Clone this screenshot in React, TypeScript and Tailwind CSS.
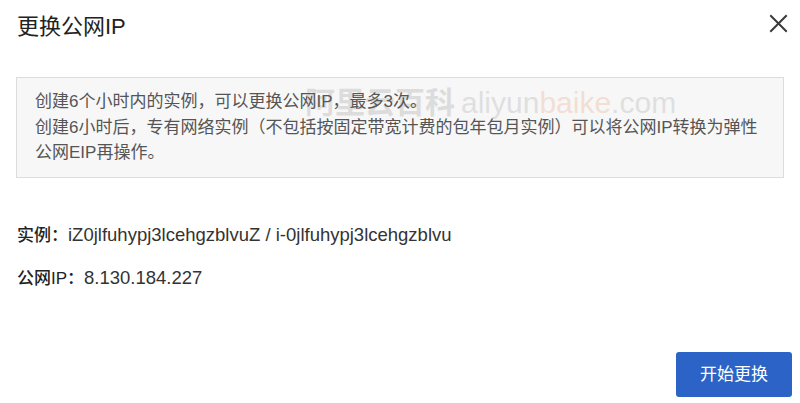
import React from "react";

export default function App() {
  return (
    <div
      className="relative w-[800px] h-[403px] bg-white flex flex-col overflow-hidden"
      style={{ fontFamily: '"Liberation Sans", "Noto Sans CJK SC", sans-serif' }}
    >
      <div className="flex items-center justify-between pl-[17px] pr-[12px] pt-[13px] h-[40px]">
        <h1 className="text-[22px] leading-[30px] text-[#222]">更换公网IP</h1>
        <button className="w-[20px] h-[20px] flex items-center justify-center -mt-[6px]" aria-label="close">
          <svg width="19" height="19" viewBox="0 0 19 19" fill="none" stroke="#3a3a3a" strokeWidth="2" strokeLinecap="square">
            <path d="M2 2 L17 17 M17 2 L2 17" />
          </svg>
        </button>
      </div>

      <div className="mt-[37px] mx-[16px] border border-[#dcdcdc] bg-[#f7f7f7] pl-[18px] pr-[18px] py-[11px] text-[17px] leading-[25.5px] text-[#555] whitespace-nowrap">
        创建6个小时内的实例，可以更换公网IP，最多3次。
        <br />
        创建6小时后，专有网络实例（不包括按固定带宽计费的包年包月实例）可以将公网IP转换为弹性
        <br />
        公网EIP再操作。
      </div>

      <div className="mt-[44px] pl-[17px] flex flex-col gap-[17px] text-[17px] leading-[25px] text-[#333]">
        <div className="flex items-baseline">
          <span className="font-medium text-[#222]">实例：</span>
          <span className="text-[18.5px]">iZ0jlfuhypj3lcehgzblvuZ / i-0jlfuhypj3lcehgzblvu</span>
        </div>
        <div className="flex items-baseline">
          <span className="font-medium text-[#222]">公网IP：</span>
          <span className="text-[18.5px]">8.130.184.227</span>
        </div>
      </div>

      <div className="mt-auto flex justify-end pr-[8px] pb-[6px]">
        <button className="w-[116px] h-[45px] rounded-[3px] bg-[#2b63c6] text-white text-[17px]">
          开始更换
        </button>
      </div>

      <div className="absolute left-[305px] top-[86px] flex items-baseline text-[30px] leading-[34px] pointer-events-none select-none opacity-[0.18] whitespace-nowrap">
        <span className="font-bold text-[#666]">阿里云百科</span>
        <span className="ml-[6px] text-[#777]">aliyun</span>
        <span className="text-[#e0703a]">baike</span>
        <span className="text-[#777]">.com</span>
      </div>
    </div>
  );
}
